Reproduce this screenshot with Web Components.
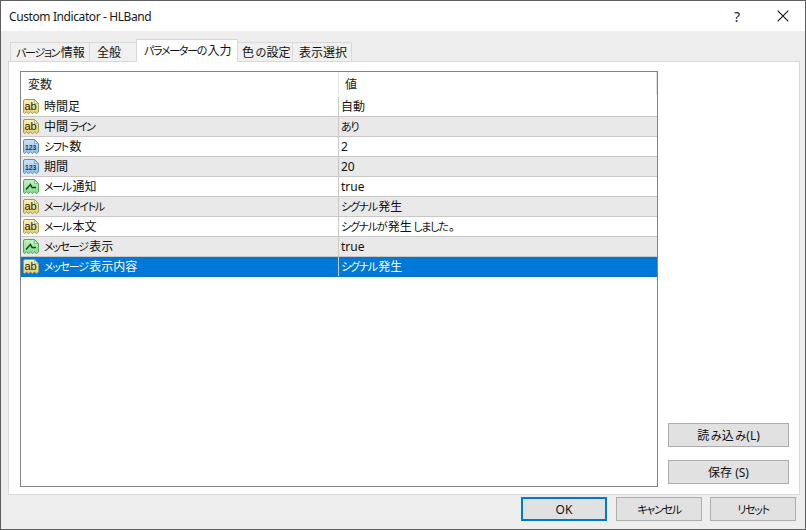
<!DOCTYPE html>
<html lang="ja">
<head>
<meta charset="utf-8">
<title>Custom Indicator - HLBand</title>
<style>
html, body { margin: 0; padding: 0; background: #3a3f3c; }
body { width: 806px; height: 530px; overflow: hidden; font: 12px "Noto Sans", "Noto Sans CJK JP", sans-serif; color: #000; font-feature-settings: "palt"; }
</style>
</head>
<body>
<x-dialog caption="Custom Indicator - HLBand">
    <x-tab slot="tabs" style="--w:80px;--p:5px"><x-k>バージョン</x-k>情報</x-tab>
    <x-tab slot="tabs" style="--w:48px;--p:7px">全般</x-tab>
    <x-tab slot="tabs" style="--w:102px;--p:7px" selected><x-k>パラメーターの</x-k>入力</x-tab>
    <x-tab slot="tabs" style="--w:56px;--p:4px">色<x-k>の</x-k>設定</x-tab>
    <x-tab slot="tabs" style="--w:60px;--p:6px">表示選択</x-tab>

    <x-param-list slot="list">
        <x-param type="ab" name="時間足" value="自動"></x-param>
        <x-param type="ab" name="中間ライン" value="あり"></x-param>
        <x-param type="num" name="シフト数" value="2"></x-param>
        <x-param type="num" name="期間" value="20"></x-param>
        <x-param type="bool" name="メール通知" value="true"></x-param>
        <x-param type="ab" name="メールタイトル" value="シグナル発生"></x-param>
        <x-param type="ab" name="メール本文" value="シグナルが発生しました。"></x-param>
        <x-param type="bool" name="メッセージ表示" value="true"></x-param>
        <x-param type="ab" name="メッセージ表示内容" value="シグナル発生" selected></x-param>
    </x-param-list>

    <x-btn slot="side">読<x-k>み</x-k>込<x-k>み</x-k> (L)</x-btn>
    <x-btn slot="side">保存 (S)</x-btn>

    <x-btn slot="footer" primary>OK</x-btn>
    <x-btn slot="footer"><x-k>キャンセル</x-k></x-btn>
    <x-btn slot="footer"><x-k>リセット</x-k></x-btn>
</x-dialog>

<script>
// kana in the original UI font is much narrower than the kanji
customElements.define('x-k', class extends HTMLElement {
    constructor() {
        super();
        let shadowRoot = this.attachShadow({ mode: 'open' });
        shadowRoot.innerHTML = `
        <style>
        :host { display: inline; font-size: 11px; letter-spacing: -1.3px; }
        </style>
        <slot></slot>
        `;
    }
});

customElements.define('x-dialog', class extends HTMLElement {
    constructor() {
        super();
        let shadowRoot = this.attachShadow({ mode: 'open' });
        shadowRoot.innerHTML = `
        <style>
        :host {
            display: flex;
            flex-direction: column;
            box-sizing: border-box;
            width: 806px;
            height: 530px;
            background: #eeeeee;
            border: 1px solid #5f5f5f;
        }
        #bar {
            flex: 0 0 30px;
            display: flex;
            align-items: center;
            background: #fff;
            padding-left: 8px;
        }
        #caption { flex: 1 1 auto; font-size: 12px; color: #1a1a1a; letter-spacing: -.4px; }
        #help { box-sizing: border-box; width: 46px; padding-left: 2px; text-align: center; font-size: 14px; color: #222; }
        #close { box-sizing: border-box; display: flex; width: 46px; height: 30px; padding-left: 1px; align-items: center; justify-content: center; }
        #tabs {
            flex: 0 0 30px;
            display: flex;
            align-items: flex-end;
            padding-left: 9px;
        }
        #pane {
            flex: 0 0 433px;
            box-sizing: border-box;
            margin-left: 7px;
            width: 792px;
            background: #fff;
            border: 1px solid #d9d9d9;
            padding: 9px 10px 7px 11px;
            display: flex;
            gap: 10px;
        }
        #side {
            flex: 0 0 121px;
            display: flex;
            flex-direction: column;
            justify-content: flex-end;
            gap: 13px;
            padding-bottom: 3px;
        }
        #footer {
            flex: 1 1 auto;
            display: flex;
            justify-content: flex-end;
            padding: 2px 9px 0 0;
        }
        #footer ::slotted(*) { width: 86px; margin-left: 8px; }
        #footer ::slotted([primary]) { margin-right: 1px; }
        </style>
        <div id="bar">
            <span id="caption"></span>
            <span id="help">?</span>
            <span id="close"><svg width="12" height="12" viewBox="0 0 12 12"><path d="M.7.7 11.3 11.3M11.3.7.7 11.3" stroke="#111" stroke-width="1.1" fill="none"/></svg></span>
        </div>
        <div id="tabs"><slot name="tabs"></slot></div>
        <div id="pane">
            <slot name="list"></slot>
            <div id="side"><slot name="side"></slot></div>
        </div>
        <div id="footer"><slot name="footer"></slot></div>
        `;
        shadowRoot.querySelector('#caption').textContent = this.getAttribute('caption');
    }
});

customElements.define('x-tab', class extends HTMLElement {
    constructor() {
        super();
        let shadowRoot = this.attachShadow({ mode: 'open' });
        shadowRoot.innerHTML = `
        <style>
        :host {
            display: block;
            box-sizing: border-box;
            width: var(--w);
            height: 20px;
            margin-bottom: -1px;
            margin-right: -1px;
            padding-left: var(--p);
            line-height: 20px;
            font-size: 12px;
            background: #f0f0f0;
            border: 1px solid #d9d9d9;
            border-bottom: 0;
            white-space: nowrap;
            color: #111;
        }
        :host([selected]) {
            position: relative;
            height: 23px;
            line-height: 21px;
            background: #fff;
            z-index: 1;
        }
        </style>
        <slot></slot>
        `;
    }
});

customElements.define('x-param-list', class extends HTMLElement {
    constructor() {
        super();
        let shadowRoot = this.attachShadow({ mode: 'open' });
        shadowRoot.innerHTML = `
        <style>
        :host {
            display: block;
            box-sizing: border-box;
            width: 639px;
            height: 416px;
            border: 1px solid #82828a;
            background: #fff;
            overflow: hidden;
        }
        #head {
            display: grid;
            grid-template-columns: 318px 318px;
            height: 25px;
            font-size: 12px;
            color: #222;
        }
        #head span { padding-left: 7px; border-right: 1px solid #e4e4e4; height: 23px; line-height: 25px; }
        #head span + span { padding-left: 6px; }
        </style>
        <div id="head"><span>変数</span><span>値</span></div>
        <slot></slot>
        `;
    }
});

// note icons, colour depends on the parameter type
const ICONS = {
    ab: { top: '#fbf0b4', bottom: '#e6cf72', edge: '#ad9a4c', fold: '#fff8d0', label: 'ab', ink: '#1c1c1c' },
    num: { top: '#cfe4f8', bottom: '#8ebce8', edge: '#5b8fc4', fold: '#e8f3fd', label: '123', ink: '#0f3566' },
    bool: { top: '#c4f2c4', bottom: '#7fd98a', edge: '#4da85a', fold: '#e4fae4', label: '', ink: '#153f15' }
};

const kana = s => s.replace(/[\u3040-\u30ff]+/g, m => `<x-k>${m}</x-k>`);

let iconId = 0;

customElements.define('x-param', class extends HTMLElement {
    constructor() {
        super();
        let shadowRoot = this.attachShadow({ mode: 'open' });
        const ic = ICONS[this.getAttribute('type')];
        const id = 'g' + iconId++;
        const inner = ic.label
            ? `<text x="7.6" y="${ic.label === 'ab' ? 12 : 11.5}" text-anchor="middle" font-family="'Liberation Sans', sans-serif" font-weight="${ic.label === 'ab' ? 400 : 700}" font-size="${ic.label === 'ab' ? 11 : 6.8}" fill="${ic.ink}">${ic.label}</text>`
            : `<path d="M3 11.5 7.5 6.5 9 9.5H13" fill="none" stroke="${ic.ink}" stroke-width="1.3"/>`;
        shadowRoot.innerHTML = `
        <style>
        :host {
            display: grid;
            grid-template-columns: 318px 318px;
            box-sizing: border-box;
            height: 20px;
            line-height: 19px;
            font-size: 12px;
            color: #111;
            background: #fff;
            border-bottom: 1px solid #c8c8c8;
        }
        :host(:nth-child(even)) { background: #e9e9e9; }
        :host([selected]) { background: #0078d7; color: #fff; border-bottom-color: #0078d7; }
        #name { display: flex; align-items: center; gap: 4px; padding-left: 2px; border-right: 1px solid #c8c8c8; white-space: nowrap; }
        svg { flex: none; }
        #value { padding-left: 2px; white-space: nowrap; }
        </style>
        <div id="name">
            <svg width="17" height="17" viewBox="0 0 17 17">
                <defs><linearGradient id="${id}" x1="0" y1="0" x2="0" y2="1"><stop offset="0" stop-color="${ic.top}"/><stop offset="1" stop-color="${ic.bottom}"/></linearGradient></defs>
                <path d="M.5 3Q.5 1.5 2 1.5H11.5L15.5 5.5V14L13.5 15.5 11.5 14 9.5 15.5 7.5 14 5.5 15.5 3.5 14 1.5 15.5 .5 14.5Z" fill="url(#${id})" stroke="${ic.edge}"/>
                <path d="M11.5 2V5.5H15Z" fill="${ic.fold}" stroke="${ic.edge}" stroke-width=".6"/>
                ${inner}
            </svg>
            <span id="n"></span>
        </div>
        <div id="value"></div>
        `;
        shadowRoot.querySelector('#n').innerHTML = kana(this.getAttribute('name'));
        shadowRoot.querySelector('#value').innerHTML = kana(this.getAttribute('value'));
    }
});

customElements.define('x-btn', class extends HTMLElement {
    constructor() {
        super();
        let shadowRoot = this.attachShadow({ mode: 'open' });
        shadowRoot.innerHTML = `
        <style>
        :host {
            display: flex;
            align-items: center;
            justify-content: center;
            box-sizing: border-box;
            height: 24px;
            background: #e1e1e1;
            border: 1px solid #adadad;
            font-size: 12px;
            color: #111;
        }
        :host([primary]) { border: 2px solid #0078d7; }
        #label { white-space: nowrap; }
        </style>
        <span id="label"><slot></slot></span>
        `;
    }
});
</script>
</body>
</html>
